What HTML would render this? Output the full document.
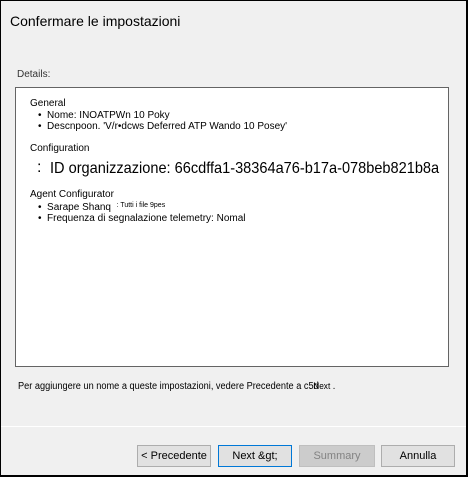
<!DOCTYPE html>
<html><head><style>
body{margin:0;width:468px;height:477px;overflow:hidden;font-family:"Liberation Sans",sans-serif;}
.win{position:absolute;left:0;top:0;width:465px;height:474px;border:1px solid #000;border-width:1px 2px 2px 1px;background:#f0f0f0;}
.t{position:absolute;white-space:nowrap;color:#000;}
.s{font-size:10px;}
.btn{position:absolute;top:445px;height:20px;border:1px solid #adadad;background:#e1e1e1;font-size:11px;text-align:center;line-height:20px;box-sizing:content-box;}
</style></head><body>
<div class="win"></div>
<div class="t" style="left:10px;top:13px;font-size:14px;">Confermare le impostazioni</div>
<div class="t s" style="left:17px;top:69px;color:#333;">Details:</div>
<div style="position:absolute;left:15px;top:87px;width:432px;height:278px;background:#fff;border:1px solid #646464;"></div>
<div class="t s" style="left:30px;top:98px;">General</div>
<div class="t s" style="left:38px;top:110px;">•&nbsp; Nome: INOATPWn 10 Poky</div>
<div class="t s" style="left:38px;top:121px;">•&nbsp; Descnpoon. 'V/r•dcws Deferred ATP Wando 10 Posey'</div>
<div class="t s" style="left:30px;top:143px;">Configuration</div>
<div class="t" style="left:37px;top:159px;font-size:16px;">:</div>
<div class="t" style="left:50px;top:160px;font-size:16px;transform:scaleX(0.91);transform-origin:0 0;">ID organizzazione: 66cdffa1-38364a76-b17a-078beb821b8a</div>
<div class="t s" style="left:30px;top:189px;">Agent Configurator</div>
<div class="t s" style="left:38px;top:202px;">•&nbsp; Sarape Shanq &nbsp;<span style="font-size:7px;vertical-align:3px">: Tutti i file 9pes</span></div>
<div class="t s" style="left:38px;top:213px;">•&nbsp; Frequenza di segnalazione telemetry: Nomal</div>
<div class="t s" style="left:18px;top:381px;transform:scaleX(0.92);transform-origin:0 0;">Per aggiungere un nome a queste impostazioni, vedere Precedente a c5d<span style="margin-left:-6px;font-size:9px">Next</span> .</div>
<div style="position:absolute;left:1px;top:426px;width:465px;height:1px;background:#fff;"></div>
<div class="btn" style="left:137px;width:72px;">&lt; Precedente</div>
<div class="btn" style="left:218px;width:72px;border-color:#0078d7;">Next &amp;gt;</div>
<div class="btn" style="left:299px;width:74px;background:#cccccc;border-color:#bfbfbf;color:#838383;">Summary</div>
<div class="btn" style="left:381px;width:72px;">Annulla</div>
</body></html>
